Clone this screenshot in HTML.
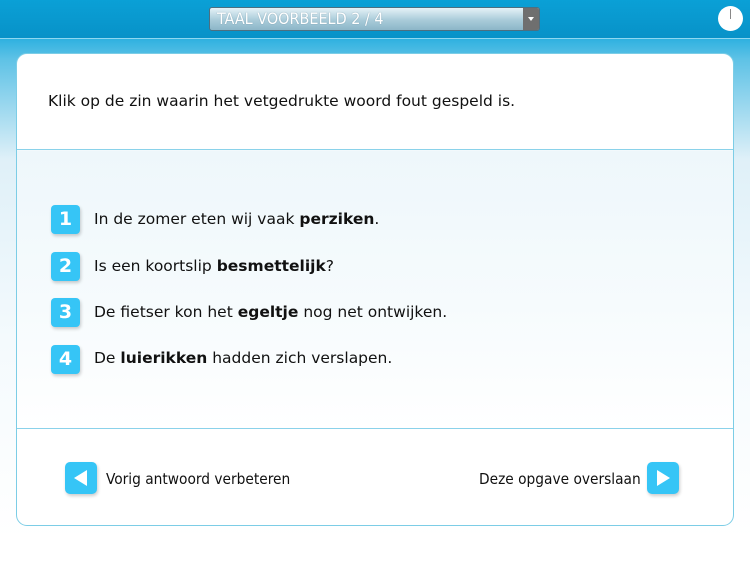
<!DOCTYPE html>
<html><head><style>
body{margin:0;width:750px;height:562px;overflow:hidden;background:#fff;font-family:"DejaVu Sans","Liberation Sans",sans-serif;position:relative}
.top{position:absolute;left:0;top:0;width:750px;height:38px;background:linear-gradient(#0aa0d6,#0892c8);border-bottom:1px solid #8fd8f0}
.bg{position:absolute;left:0;top:39px;width:750px;height:500px;background:linear-gradient(#2fb1e0 0px,#5ec2e6 20px,#dff0f8 120px,#f4fafd 300px,#fff 500px)}
.dd{position:absolute;left:209px;top:7px;width:331px;height:24px;border:1px solid #4d6f80;border-radius:3px;background:linear-gradient(#e6f2f7,#a9cbd9 55%,#8cb6c8);box-sizing:border-box}
.dd span{position:absolute;left:7px;top:1px;color:#fff;font-size:16px;font-family:"DejaVu Sans Condensed","DejaVu Sans",sans-serif;text-shadow:0 0 1px #6a8fa0}
.dd i{position:absolute;right:0;top:0;width:16px;height:22px;background:#6f6f6f;border-radius:0 2px 2px 0}
.dd i:after{content:"";position:absolute;left:5px;top:9px;border-left:3px solid transparent;border-right:3px solid transparent;border-top:4px solid #fff}
.clock{position:absolute;left:718px;top:6px;width:25px;height:25px;border-radius:50%;background:#fff}
.clock:after{content:"";position:absolute;left:12px;top:3px;width:1px;height:10px;background:#888}
.card{position:absolute;left:16px;top:53px;width:718px;height:473px;box-sizing:border-box;border:1px solid #7ccde6;border-radius:11px;background:linear-gradient(#fff 0,#fff 95px,#eef7fb 97px,#f6fbfd 250px,#fff 375px);overflow:hidden}
.hl{position:absolute;left:0;width:716px;height:1px;background:#8ad2ea}
.q{position:absolute;left:31px;top:38px;font-size:15.5px;color:#111}
.n{position:absolute;left:34px;width:29px;height:29px;border-radius:4px;background:#36c5f6;color:#fff;font-weight:bold;font-size:19px;text-align:center;line-height:29px;box-shadow:1px 2px 3px rgba(0,0,0,.2)}
.t{position:absolute;left:77px;font-size:15.5px;color:#111}
.b{position:absolute;width:32px;height:32px;border-radius:5px;background:#36c5f6;box-shadow:1px 2px 3px rgba(0,0,0,.2)}
.bt{position:absolute;font-size:15.3px;color:#111;font-family:"DejaVu Sans Condensed","DejaVu Sans",sans-serif}
</style></head><body>
<div class="bg"></div>
<div class="top"></div>
<div class="dd"><span>TAAL VOORBEELD 2 / 4</span><i></i></div>
<div class="clock"></div>
<div class="card">
<div class="q">Klik op de zin waarin het vetgedrukte woord fout gespeld is.</div>
<div class="hl" style="top:95px"></div>
<div class="n" style="top:151px">1</div><div class="t" style="top:156px">In de zomer eten wij vaak <b>perziken</b>.</div>
<div class="n" style="top:198px">2</div><div class="t" style="top:203px">Is een koortslip <b>besmettelijk</b>?</div>
<div class="n" style="top:244px">3</div><div class="t" style="top:249px">De fietser kon het <b>egeltje</b> nog net ontwijken.</div>
<div class="n" style="top:291px">4</div><div class="t" style="top:295px">De <b>luierikken</b> hadden zich verslapen.</div>
<div class="hl" style="top:374px"></div>
<div class="b" style="left:48px;top:408px"><svg width="32" height="32"><polygon points="22,8 22,24 9,16" fill="#fff"/></svg></div>
<div class="bt" style="left:89px;top:416px">Vorig antwoord verbeteren</div>
<div class="bt" style="left:462px;top:416px">Deze opgave overslaan</div>
<div class="b" style="left:630px;top:408px"><svg width="32" height="32"><polygon points="10,8 10,24 23,16" fill="#fff"/></svg></div>
</div>
</body></html>
